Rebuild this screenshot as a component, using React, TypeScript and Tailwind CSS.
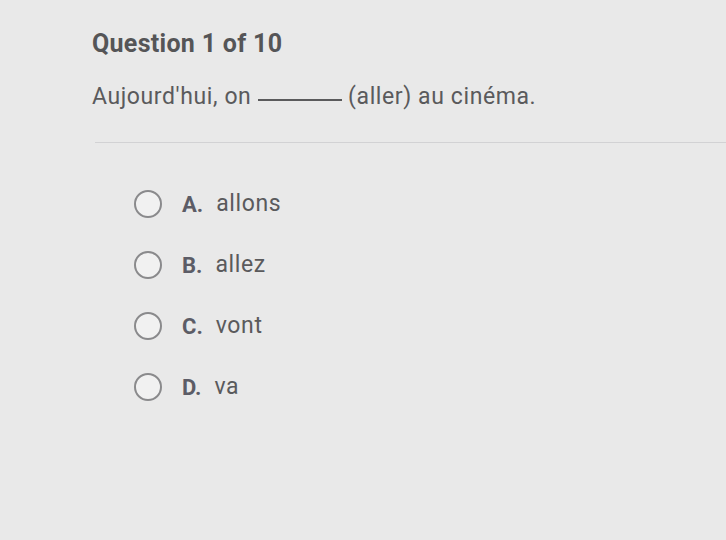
const options = [
  { key: "A", text: "allons" },
  { key: "B", text: "allez" },
  { key: "C", text: "vont" },
  { key: "D", text: "va" },
];

export default function App() {
  return (
    <div className="w-[726px] h-[540px] overflow-hidden bg-[#e9e9e9] text-[#5a5a5c] font-['Roboto',sans-serif]">
      <div className="pl-[92px] pt-[28px]">
        <h1 className="text-[25px] font-bold leading-[32px] tracking-[0.3px] text-[#555557]">Question 1 of 10</h1>
        <p className="mt-[22px] text-[23px] leading-[30px] tracking-[0.6px]">
          Aujourd'hui, on{" "}
          <span className="inline-block w-[84px] border-b-2 border-[#5a5a5c] align-[3px]" />{" "}
          (aller) au cinéma.
        </p>
      </div>
      <div className="ml-[95px] mt-[30px] h-px bg-[#d2d2d4]" />
      <div className="mt-[46px] pl-[134px] flex flex-col gap-[31px]">
        {options.map((o) => (
          <label key={o.key} className="flex items-center h-[30px] cursor-pointer">
            <span className="w-[28px] h-[28px] rounded-full border-2 border-[#8a8a8c] bg-[#f1f1f1]" />
            <span className="ml-[20px] text-[22px] font-bold text-[#5c5c66]">{o.key}.</span>
            <span className="ml-[13px] text-[23px] tracking-[0.6px]">{o.text}</span>
          </label>
        ))}
      </div>
    </div>
  );
}
